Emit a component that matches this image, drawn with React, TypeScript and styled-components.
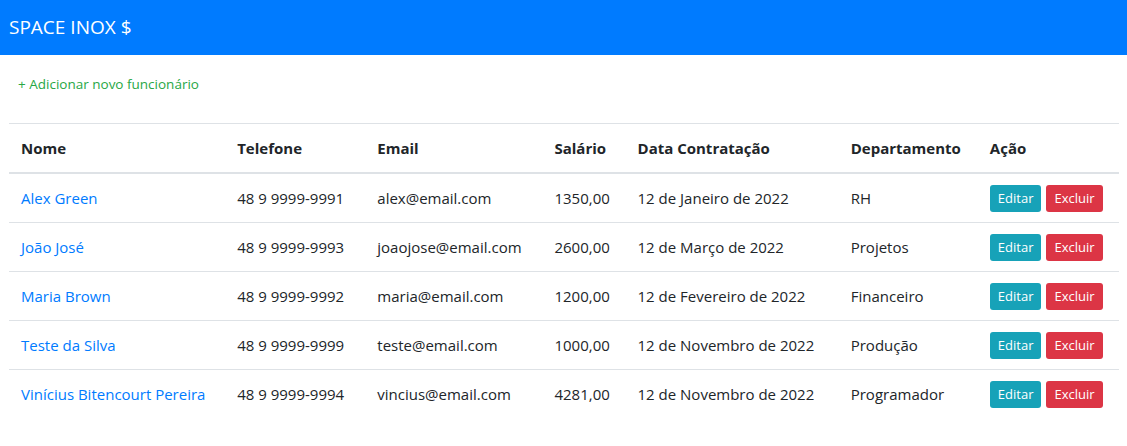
import React from 'react';
import styled, { createGlobalStyle } from 'styled-components';

const GlobalStyle = createGlobalStyle`
  body {
    margin: 0;
    font-family: "Open Sans", "Liberation Sans", sans-serif;
    font-size: 15px;
    color: #212529;
    background: #fff;
  }
`;

const NavBar = styled.nav`
  height: 55px;
  background-color: #007bff;
  display: flex;
  align-items: center;
  padding: 0 9px;
`;

const Brand = styled.span`
  color: #fff;
  font-size: 19px;
  line-height: 1;
`;

const Main = styled.main`
  padding: 0 8px 0 9px;
`;

const AddRow = styled.div`
  padding: 15px 0 24px;
  display: flex;
  align-items: center;
`;

const AddLink = styled.a`
  color: #28a745;
  font-size: 13.5px;
  line-height: 21px;
  padding: 4px 9px;
  text-decoration: none;
  cursor: pointer;
`;

const Table = styled.table`
  width: 100%;
  border-collapse: collapse;
  table-layout: fixed;
`;

const Th = styled.th<{ $w: number }>`
  box-sizing: border-box;
  width: ${(p) => p.$w}px;
  text-align: left;
  font-weight: 700;
  padding: 12px;
  line-height: 24px;
  border-top: 1px solid #dee2e6;
  border-bottom: 2px solid #dee2e6;
  white-space: nowrap;
`;

const Td = styled.td`
  padding: 12px;
  line-height: 24px;
  border-top: 1px solid #dee2e6;
  white-space: nowrap;
`;

const NameLink = styled.a`
  color: #007bff;
  text-decoration: none;
`;

const Actions = styled.div`
  display: flex;
  align-items: center;
  height: 24px;
  gap: 5px;
`;

const Btn = styled.button<{ $kind: 'info' | 'danger' }>`
  font-family: inherit;
  font-size: 13px;
  line-height: 19px;
  padding: 4px 8px;
  border: none;
  border-radius: 3px;
  color: #fff;
  background-color: ${(p) => (p.$kind === 'info' ? '#17a2b8' : '#dc3545')};
  cursor: pointer;
`;

const columns = [
  { label: 'Nome', w: 216 },
  { label: 'Telefone', w: 140 },
  { label: 'Email', w: 177 },
  { label: 'Salário', w: 83 },
  { label: 'Data Contratação', w: 213 },
  { label: 'Departamento', w: 139 },
  { label: 'Ação', w: 141 },
];

const employees = [
  { name: 'Alex Green', phone: '48 9 9999-9991', email: 'alex@email.com', salary: '1350,00', date: '12 de Janeiro de 2022', dept: 'RH' },
  { name: 'João José', phone: '48 9 9999-9993', email: 'joaojose@email.com', salary: '2600,00', date: '12 de Março de 2022', dept: 'Projetos' },
  { name: 'Maria Brown', phone: '48 9 9999-9992', email: 'maria@email.com', salary: '1200,00', date: '12 de Fevereiro de 2022', dept: 'Financeiro' },
  { name: 'Teste da Silva', phone: '48 9 9999-9999', email: 'teste@email.com', salary: '1000,00', date: '12 de Novembro de 2022', dept: 'Produção' },
  { name: 'Vinícius Bitencourt Pereira', phone: '48 9 9999-9994', email: 'vincius@email.com', salary: '4281,00', date: '12 de Novembro de 2022', dept: 'Programador' },
];

const App: React.FC = () => {
  return (
    <>
      <GlobalStyle />
      <NavBar>
        <Brand>SPACE INOX $</Brand>
      </NavBar>
      <Main>
        <AddRow>
          <AddLink>+ Adicionar novo funcionário</AddLink>
        </AddRow>
        <Table>
          <thead>
            <tr>
              {columns.map((c) => (
                <Th key={c.label} $w={c.w}>{c.label}</Th>
              ))}
            </tr>
          </thead>
          <tbody>
            {employees.map((e) => (
              <tr key={e.email}>
                <Td><NameLink>{e.name}</NameLink></Td>
                <Td>{e.phone}</Td>
                <Td>{e.email}</Td>
                <Td>{e.salary}</Td>
                <Td>{e.date}</Td>
                <Td>{e.dept}</Td>
                <Td>
                  <Actions>
                    <Btn $kind="info">Editar</Btn>
                    <Btn $kind="danger">Excluir</Btn>
                  </Actions>
                </Td>
              </tr>
            ))}
          </tbody>
        </Table>
      </Main>
    </>
  );
};

export default App;
